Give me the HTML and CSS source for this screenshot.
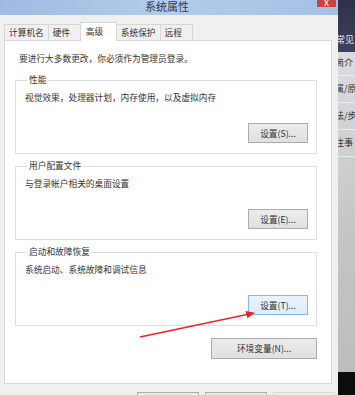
FILE: index.html
```html
<!DOCTYPE html>
<html lang="zh-CN">
<head>
<meta charset="utf-8">
<title>系统属性</title>
<link rel="stylesheet" href="styles.css">
</head>
<body>
<div class="screen">
  <div class="dialog">
    <div class="titlebar">
      <span class="title">系统属性</span>
      <span class="close">x</span>
    </div>
    <div class="tabs">
      <span class="tab tab-wide">计算机名</span>
      <span class="tab">硬件</span>
      <span class="tab tab-active">高级</span>
      <span class="tab tab-wide">系统保护</span>
      <span class="tab">远程</span>
    </div>
    <div class="panel">
      <p class="intro">要进行大多数更改，你必须作为管理员登录。</p>
      <fieldset class="group group-first">
        <legend>性能</legend>
        <p class="desc">视觉效果，处理器计划，内存使用，以及虚拟内存</p>
        <div class="actions"><button class="btn">设置(S)...</button></div>
      </fieldset>
      <fieldset class="group">
        <legend>用户配置文件</legend>
        <p class="desc">与登录帐户相关的桌面设置</p>
        <div class="actions"><button class="btn">设置(E)...</button></div>
      </fieldset>
      <fieldset class="group">
        <legend>启动和故障恢复</legend>
        <p class="desc">系统启动、系统故障和调试信息</p>
        <div class="actions"><button class="btn btn-hot">设置(T)...</button></div>
      </fieldset>
      <div class="env"><button class="btn btn-wide">环境变量(N)...</button></div>
    </div>
    <div class="footer">
      <button class="btn btn-foot">确定</button>
      <button class="btn btn-foot">取消</button>
      <button class="btn btn-foot btn-off">应用(A)</button>
    </div>
  </div>
  <div class="side">
    <div class="side-head"><span class="side-text side-light">常见</span></div>
    <div class="side-list">
      <div class="side-item side-item-first"><span class="side-text">简介</span></div>
      <div class="side-item"><span class="side-text">属/原</span></div>
      <div class="side-item"><span class="side-text">法/步</span></div>
      <div class="side-item"><span class="side-text">注事</span></div>
    </div>
    <div class="side-foot"></div>
  </div>
  <svg class="arrow" width="355" height="395" viewBox="0 0 355 395">
    <line x1="140" y1="337" x2="247" y2="314.5" stroke="#e3262c" stroke-width="1.6"/>
    <polygon points="255,312.8 245.5,311 247.5,318.3" fill="#e3262c"/>
  </svg>
</div>
</body>
</html>
```

FILE: styles.css
```css
* { box-sizing: border-box; }
html, body { margin: 0; padding: 0; }
body {
  width: 355px;
  height: 395px;
  overflow: hidden;
  font-family: "Noto Sans CJK SC", "Noto Sans", sans-serif;
  font-size: 8.7px;
  color: #333;
  background: #c8c8cc;
}
.screen {
  position: relative;
  display: flex;
  width: 355px;
  height: 395px;
  overflow: hidden;
}
.dialog {
  width: 338px;
  height: 395px;
  flex: none;
  background: #f0f0f0;
  overflow: hidden;
}
.titlebar {
  height: 15px;
  display: flex;
  align-items: flex-start;
  background: linear-gradient(90deg, #9fbbe2 0%, #b3cbec 50%, #a5c0e6 100%);
}
.title {
  flex: 1;
  text-align: center;
  padding-left: 17px;
  font-size: 11px;
  line-height: 12px;
  color: #2c3a55;
}
.close {
  width: 19px;
  height: 7px;
  margin-right: 2px;
  background: #c9443c;
  color: #fff;
  font-size: 10px;
  line-height: 3px;
  text-align: center;
  overflow: hidden;
}
.tabs {
  position: relative;
  z-index: 1;
  display: flex;
  align-items: flex-end;
  height: 18px;
  margin-top: 7px;
  padding-left: 4px;
}
.tab {
  height: 16px;
  min-width: 33px;
  padding: 0 4px;
  margin-right: -1px;
  border: 1px solid #d6d6d6;
  border-bottom: none;
  background: #f0f0f0;
  line-height: 15px;
  white-space: nowrap;
}
.tab-wide { min-width: 43px; }
.tab-active {
  height: 19px;
  min-width: 37px;
  margin-bottom: -1px;
  padding-left: 5px;
  background: #fff;
  line-height: 17px;
}
.panel {
  width: 328px;
  height: 344px;
  margin-left: 4px;
  padding-top: 12px;
  border: 1px solid #d6d6d6;
  background: #fff;
}
.intro {
  margin: 0 0 0 14px;
  line-height: 12px;
  white-space: nowrap;
}
.group {
  min-width: 0;
  margin: 6px 14px 0 10px;
  padding: 0 8px 10px 8px;
  border: 1px solid #dedede;
}
.group-first { margin-top: 9px; }
.group legend {
  margin-left: 3px;
  padding: 0 2px;
  line-height: 12px;
}
.desc {
  margin: 6px 0 0 1px;
  line-height: 12px;
  white-space: nowrap;
}
.actions {
  display: flex;
  justify-content: flex-end;
  margin-top: 19px;
}
.btn {
  width: 60px;
  height: 20px;
  padding: 0;
  border: 1px solid #acacac;
  background: linear-gradient(#ececec, #e0e0e0);
  font-family: "Noto Sans CJK SC", "Noto Sans", sans-serif;
  font-size: 8.7px;
  line-height: 17px;
  color: #333;
}
.btn-hot {
  border-color: #86b7e6;
  background: linear-gradient(#e9f3fd, #dcebfb);
}
.env {
  display: flex;
  justify-content: flex-end;
  margin: 12px 14px 0 0;
}
.btn-wide {
  width: 106px;
  height: 21px;
}
.footer {
  display: flex;
  gap: 6px;
  padding: 8px 0 0 137px;
}
.btn-foot { width: 62px; }
.btn-off { border-color: #d8d8d8; color: #999; }
.side {
  width: 17px;
  flex: none;
  display: flex;
  flex-direction: column;
  height: 395px;
  overflow: hidden;
}
.side-head {
  height: 52px;
  padding-top: 34px;
  background: linear-gradient(#2f3149, #3e415e);
  overflow: hidden;
}
.side-text {
  display: block;
  white-space: nowrap;
  line-height: 12px;
  font-size: 9px;
  text-indent: -3px;
  color: #333;
}
.side-light { color: #e6e8f2; text-indent: -2px; }
.side-list {
  flex: 1;
  background: linear-gradient(#dcdce0, #c4c4c6 60%, #bdbdbf);
}
.side-item {
  height: 27px;
  padding-top: 7px;
  border-bottom: 1px solid #ececee;
  overflow: hidden;
}
.side-item-first { height: 24px; padding-top: 5px; }
.side-foot {
  height: 23px;
  background: #0d0d0d;
}
.arrow {
  position: absolute;
  left: 0;
  top: 0;
  pointer-events: none;
}
```
